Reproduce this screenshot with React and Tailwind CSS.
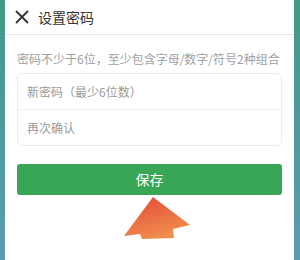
import React from "react";

const font = { fontFamily: '"Noto Sans CJK SC", "Noto Sans", sans-serif' };

const App = () => {
    return (
        <div className="relative w-[300px] h-[260px] flex overflow-hidden" style={font}>
            <div className="w-[5px] h-full bg-gradient-to-b from-[#3f9a88] to-[#5c9bb0]" />
            <div className="w-[289px] h-full bg-white flex flex-col">
                <div className="h-[35px] flex items-center border-b border-[#e6e6e6] pl-[10px]">
                    <svg width="14" height="14" viewBox="0 0 14 14">
                        <path d="M1.5 1.5 L12.5 12.5 M12.5 1.5 L1.5 12.5" stroke="#333" strokeWidth="1.8" strokeLinecap="round" />
                    </svg>
                    <span className="ml-[9px] text-[14px] text-[#333] leading-none">设置密码</span>
                </div>
                <div className="px-3">
                    <p className="pt-[15px] text-[12px] leading-[17px] text-[#a0a0a0] whitespace-nowrap">
                        密码不少于6位，至少包含字母/数字/符号2种组合
                    </p>
                    <div className="mt-[6px] border border-[#ececec] rounded-[5px]">
                        <div className="h-[36px] flex items-center px-[9px] border-b border-[#efefef] text-[12px] text-[#999]">
                            新密码（最少6位数）
                        </div>
                        <div className="h-[35px] flex items-center px-[9px] text-[12px] text-[#999]">
                            再次确认
                        </div>
                    </div>
                    <button className="mt-[18px] w-full h-[31px] bg-[#38a655] rounded-[3px] text-white text-[14px] flex items-center justify-center">
                        保存
                    </button>
                </div>
            </div>
            <div className="w-[6px] h-full bg-gradient-to-b from-[#3f9a88] to-[#5c9bb0]" />
            <svg className="absolute left-0 top-0 pointer-events-none" width="300" height="260" viewBox="0 0 300 260">
                <defs>
                    <linearGradient id="arrowGrad" x1="0" y1="0" x2="0.4" y2="1">
                        <stop offset="0" stopColor="#e5473a" />
                        <stop offset="1" stopColor="#f08c4c" />
                    </linearGradient>
                </defs>
                <polygon points="153,197 190,225 173,229 174,238 142,239 140,234 124,236" fill="url(#arrowGrad)" />
            </svg>
        </div>
    );
};

export default App;
